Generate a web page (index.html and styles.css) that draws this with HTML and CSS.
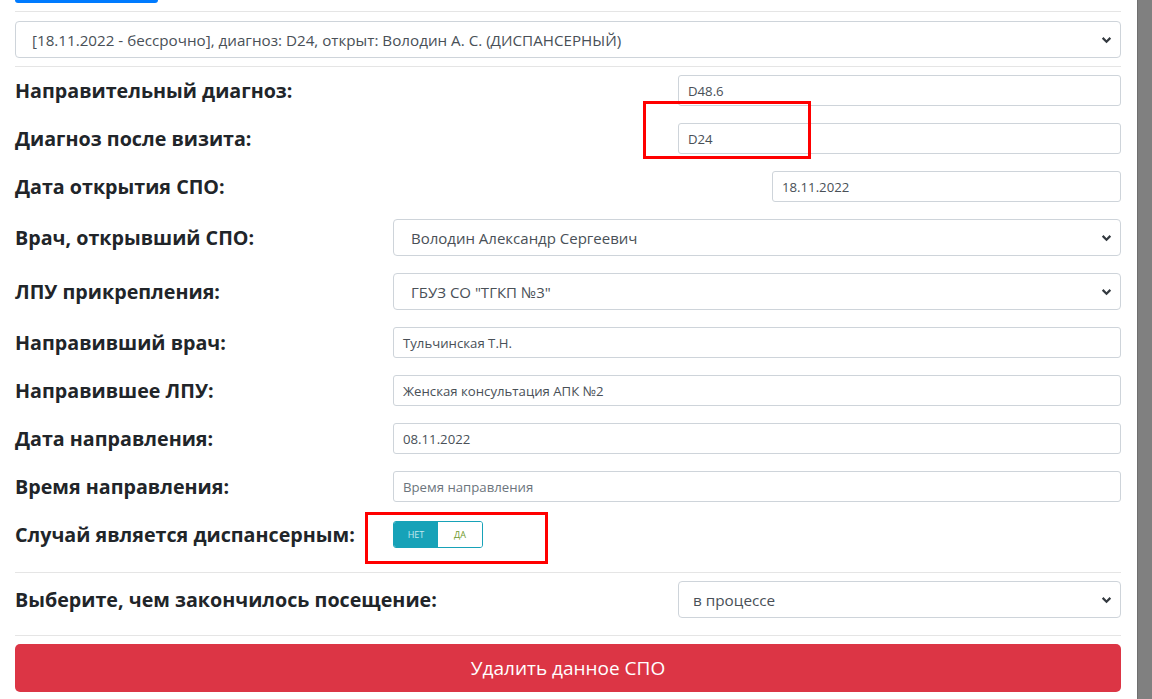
FILE: index.html
```html
<!DOCTYPE html>
<html lang="ru">
<head>
<meta charset="utf-8">
<link rel="stylesheet" href="styles.css">
</head>
<body>
<div class="page">
  <main class="main">
    <div class="top-btn"></div>
    <hr class="sep sep-top">
    <div class="select select-wide">
      <span>[18.11.2022 - бессрочно], диагноз: D24, открыт: Володин А. С. (ДИСПАНСЕРНЫЙ)</span>
      <svg class="chev" viewBox="0 0 10 8"><path d="M1.5 2.5 L5 6 L8.5 2.5" fill="none" stroke="#343a40" stroke-width="2"/></svg>
    </div>
    <hr class="sep sep-after-select">

    <div class="row">
      <label class="lbl">Направительный диагноз:</label>
      <div class="input w-mid">D48.6</div>
    </div>
    <div class="row">
      <label class="lbl">Диагноз после визита:</label>
      <div class="input w-mid mark-host">D24<span class="mark mark-d24"></span></div>
    </div>
    <div class="row">
      <label class="lbl">Дата открытия СПО:</label>
      <div class="input w-narrow">18.11.2022</div>
    </div>
    <div class="row row-sel">
      <label class="lbl">Врач, открывший СПО:</label>
      <div class="select w-wide pad-big">
        <span>Володин Александр Сергеевич</span>
        <svg class="chev" viewBox="0 0 10 8"><path d="M1.5 2.5 L5 6 L8.5 2.5" fill="none" stroke="#343a40" stroke-width="2"/></svg>
      </div>
    </div>
    <div class="row row-sel">
      <label class="lbl">ЛПУ прикрепления:</label>
      <div class="select w-wide pad-big">
        <span>ГБУЗ СО "ТГКП №3"</span>
        <svg class="chev" viewBox="0 0 10 8"><path d="M1.5 2.5 L5 6 L8.5 2.5" fill="none" stroke="#343a40" stroke-width="2"/></svg>
      </div>
    </div>
    <div class="row">
      <label class="lbl">Направивший врач:</label>
      <div class="input w-wide">Тульчинская Т.Н.</div>
    </div>
    <div class="row">
      <label class="lbl">Направившее ЛПУ:</label>
      <div class="input w-wide">Женская консультация АПК №2</div>
    </div>
    <div class="row">
      <label class="lbl">Дата направления:</label>
      <div class="input w-wide">08.11.2022</div>
    </div>
    <div class="row row-before-toggle">
      <label class="lbl">Время направления:</label>
      <div class="input w-wide placeholder">Время направления</div>
    </div>
    <div class="row row-toggle">
      <label class="lbl">Случай является диспансерным:</label>
      <div class="w-wide mark-host">
        <div class="toggle">
          <span class="tg-off">НЕТ</span>
          <span class="tg-on">ДА</span>
        </div>
        <span class="mark mark-toggle"></span>
      </div>
    </div>
    <hr class="sep sep-mid">
    <div class="row row-sel row-end">
      <label class="lbl">Выберите, чем закончилось посещение:</label>
      <div class="select w-mid pad-small">
        <span>в процессе</span>
        <svg class="chev" viewBox="0 0 10 8"><path d="M1.5 2.5 L5 6 L8.5 2.5" fill="none" stroke="#343a40" stroke-width="2"/></svg>
      </div>
    </div>
    <hr class="sep sep-bottom">
    <button class="btn-danger">Удалить данное СПО</button>
  </main>
  <div class="scrollbar"></div>
</div>
</body>
</html>
```
FILE: styles.css
```css
html, body {
  margin: 0;
  padding: 0;
  background: #fff;
  height: 100%;
  overflow: hidden;
}
body {
  font-family: "Open Sans", "Noto Sans", sans-serif;
  color: #212529;
}
.page {
  display: flex;
  height: 699px;
}
.main {
  width: 1106px;
  padding: 0 16px 0 15px;
  flex: none;
}
.scrollbar {
  flex: 1;
  background: #808080;
  border-left: 1px solid #6f6f6f;
}
.top-btn {
  width: 143px;
  height: 3px;
  background: #007bff;
  border-radius: 0 0 4px 4px;
}
.sep {
  border: 0;
  border-top: 1px solid #e5e5e5;
  margin: 0;
}
.sep-top { margin-top: 8px; margin-bottom: 9px; }
.sep-after-select { margin-top: 8px; margin-bottom: 8px; }
.sep-mid { margin-top: 24px; margin-bottom: 8px; }
.sep-bottom { margin-top: 17px; margin-bottom: 8px; }

.select {
  box-sizing: border-box;
  height: 37px;
  border: 1px solid #ced4da;
  border-radius: 4px;
  display: flex;
  align-items: center;
  justify-content: space-between;
  padding: 0 8px 0 16px;
  font-size: 15.2px;
  color: #495057;
  background: #fff;
}
.select-wide { width: 1106px; }
.pad-big { padding-left: 17px; font-size: 15px; }
.pad-small { padding-left: 14px; font-size: 15.3px; }
.chev { width: 11px; height: 9px; }

.row {
  display: flex;
  align-items: center;
  justify-content: space-between;
  height: 31px;
  margin-bottom: 17px;
}
.row-sel { height: 37px; }
.row-before-toggle { margin-bottom: 19px; }
.lbl {
  font-size: 19.7px;
  font-weight: 700;
  color: #212529;
  white-space: nowrap;
}
.input {
  box-sizing: border-box;
  height: 31px;
  border: 1px solid #ced4da;
  border-radius: 3px;
  display: flex;
  align-items: center;
  padding: 0 9px;
  font-size: 13.2px;
  color: #495057;
  background: #fff;
}
.placeholder { color: #6c757d; }
.w-mid { width: 443px; }
.w-narrow { width: 349px; }
.w-wide { width: 728px; }

.mark-host { position: relative; }
.mark {
  position: absolute;
  border: 3px solid #ff0000;
  box-sizing: border-box;
  pointer-events: none;
}
.mark-d24 {
  left: -36px;
  top: -23px;
  width: 168px;
  height: 58px;
}
.row-toggle { margin-bottom: 0; height: 27px; }
.toggle {
  display: flex;
  width: 90px;
  height: 27px;
  box-sizing: border-box;
  border: 1px solid #17a2b8;
  border-radius: 3px;
  overflow: hidden;
  font-size: 9px;
  text-transform: uppercase;
}
.tg-off {
  width: 44px;
  background: #17a2b8;
  color: #c6e8ef;
  display: flex;
  align-items: center;
  justify-content: center;
}
.tg-on {
  flex: 1;
  background: #fff;
  color: #6f9a2e;
  display: flex;
  align-items: center;
  justify-content: center;
}
.mark-toggle {
  left: -28px;
  top: -9px;
  width: 183px;
  height: 52px;
}
.row-end { margin-bottom: 0; }

.btn-danger {
  display: block;
  width: 1106px;
  height: 48px;
  border: 0;
  border-radius: 5px;
  background: #dc3545;
  color: #fff;
  font-family: "Open Sans", "Noto Sans", sans-serif;
  font-size: 19px;
}
```
